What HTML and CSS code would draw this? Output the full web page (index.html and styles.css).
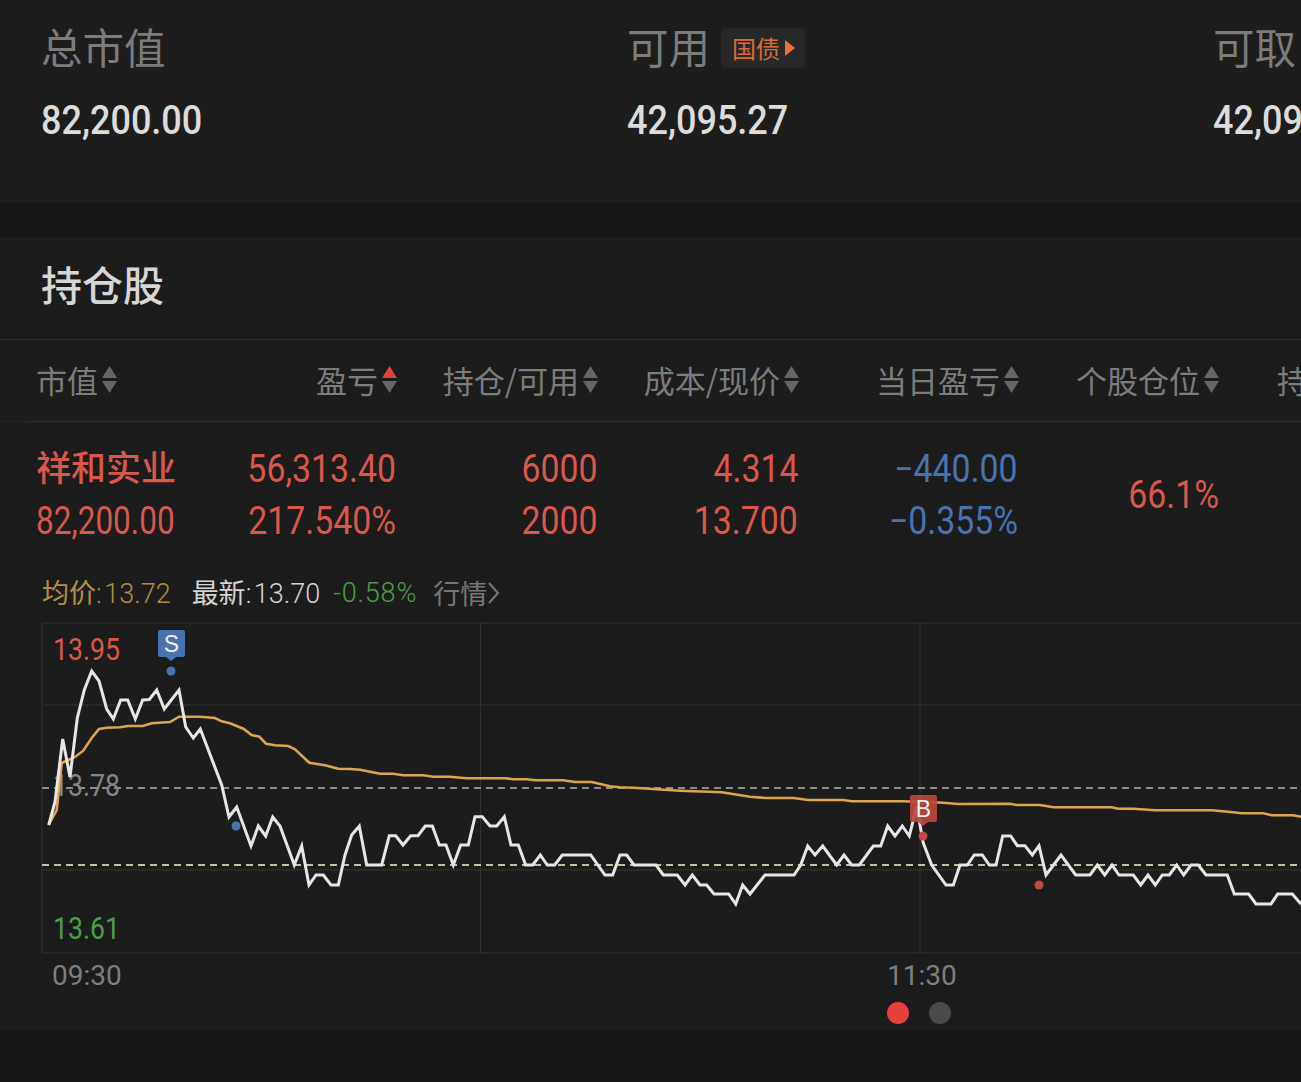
FILE: index.html
```html
<!DOCTYPE html>
<html lang="zh-CN">
<head>
  <meta charset="UTF-8">
  <title>持仓股</title>
  <link rel="stylesheet" href="styles.css">
</head>
<body>

  <svg class="defs" width="0" height="0">
    <symbol id="sort" viewBox="0 0 15 28">
      <polygon points="7.5,0 15,12 0,12" fill="#666"/>
      <polygon points="0,15 15,15 7.5,27" fill="#666"/>
    </symbol>
    <symbol id="sort-up" viewBox="0 0 15 28">
      <polygon points="7.5,0 15,12 0,12" fill="#e2403f"/>
      <polygon points="0,15 15,15 7.5,27" fill="#666"/>
    </symbol>
  </svg>

  <section class="stats">
    <div class="stat">
      <div class="stat-label">总市值</div>
      <div class="stat-value">82,200.00</div>
    </div>
    <div class="stat">
      <div class="stat-label">可用
        <span class="badge">国债<svg class="badge-arrow" width="10" height="16" viewBox="0 0 10 16"><polygon points="0,0 10,8 0,16" fill="#e8713a"/></svg></span>
      </div>
      <div class="stat-value">42,095.27</div>
    </div>
    <div class="stat">
      <div class="stat-label">可取</div>
      <div class="stat-value">42,095.27</div>
    </div>
  </section>

  <div class="band"></div>

  <section class="holdings">
    <h2 class="title">持仓股</h2>

    <div class="table-head">
      <div class="th th-left">市值<svg class="sort"><use href="#sort"/></svg></div>
      <div class="th">盈亏<svg class="sort"><use href="#sort-up"/></svg></div>
      <div class="th">持仓/可用<svg class="sort"><use href="#sort"/></svg></div>
      <div class="th">成本/现价<svg class="sort"><use href="#sort"/></svg></div>
      <div class="th">当日盈亏<svg class="sort"><use href="#sort"/></svg></div>
      <div class="th">个股仓位<svg class="sort"><use href="#sort"/></svg></div>
      <div class="th th-left th-last">持仓天数</div>
    </div>

    <div class="table-row">
      <div class="td td-left red"><span class="name">祥和实业</span><span>82,200.00</span></div>
      <div class="td red"><span>56,313.40</span><span>217.540%</span></div>
      <div class="td red"><span>6000</span><span>2000</span></div>
      <div class="td red"><span>4.314</span><span>13.700</span></div>
      <div class="td blue"><span>−440.00</span><span>−0.355%</span></div>
      <div class="td td-mid red"><span>66.1%</span></div>
    </div>

    <div class="quote">
      <span class="gold"><i>均价</i>: 13.72</span>
      <span class="latest"><i>最新</i>: 13.70</span>
      <span class="green">-0.58%</span>
      <span class="more"><i>行情</i><svg width="13" height="24" viewBox="0 0 13 24"><polyline points="2,2 11,12 2,22" fill="none" stroke="#777" stroke-width="2"/></svg></span>
    </div>

    <svg class="chart" width="1301" height="340" viewBox="0 620 1301 340">
      <g class="grid">
        <line x1="42" y1="623" x2="1301" y2="623"/>
        <line x1="42" y1="705" x2="1301" y2="705"/>
        <line x1="42" y1="870" x2="1301" y2="870"/>
        <line x1="42" y1="953" x2="1301" y2="953"/>
        <line x1="42" y1="623" x2="42" y2="953"/>
        <line x1="480.5" y1="623" x2="480.5" y2="953"/>
        <line x1="920" y1="623" x2="920" y2="953"/>
      </g>
      <line class="dash-prev" x1="42" y1="788" x2="1301" y2="788"/>
      <line class="dash-cost" x1="42" y1="865" x2="1301" y2="865"/>

      <text class="axis-red" x="53" y="660" textLength="67" lengthAdjust="spacingAndGlyphs">13.95</text>
      <text class="axis-gray" x="53" y="796" textLength="67" lengthAdjust="spacingAndGlyphs">13.78</text>
      <text class="axis-green" x="53" y="939" textLength="67" lengthAdjust="spacingAndGlyphs">13.61</text>

      <polyline class="line-avg" points="48.7,825 56.7,810 61.7,763 75,757 83.3,750.7 91.7,738 99,729 106.7,727.7 120,727.3 128.3,726 142.7,726 151.7,723.3 170,722 179,716.7 200,716.7 215,718 221.7,721.3 230,723.3 243.3,728.7 251.7,735 259.3,736.7 266,743.7 275,745.3 288.3,746 295,749.3 309.3,762.7 325,765.3 338.3,768.7 350,769 360,769.7 380,773.7 393.3,773.7 403.3,775.3 423.3,775.3 433.3,776.7 450,776.7 466.7,778.3 505,778.3 513,779.3 526.7,779.3 535,780.3 563.3,780.3 575,782 591.7,782 610,786.3 620,787.3 633.3,787.7 656.7,789.3 680,790.7 721.7,792.3 750,796.7 765,798 793.3,798 808.3,800 843.3,800 851.7,801.3 903.3,801.3 943,802.7 958,804 1010,803.7 1016.7,805 1040,805 1053.3,807.3 1111.7,807.3 1118.3,808.7 1133.3,808.7 1155,810.3 1211.7,810.3 1228.3,811.7 1241.7,813.3 1263.3,813.3 1271.7,815.3 1293.3,815.3 1301,816.7"/>

      <polyline class="line-price" points="48.7,825 55,802 62.7,739 70,777 77.3,718 84.3,690 91.7,671 99,681 106.7,709 113.3,719 120.7,700 127.7,700 135.3,719 142.7,700 149.3,699.5 156.7,690 164.3,709 179,690 185.7,727 193.3,738 200.3,729 221.7,785 229,817 236.7,807 251,846 258.3,826 265.7,836 272.7,817 280,826 294.3,865 301.7,846 309,885 316,875 323.3,875 331,885 338.3,885 345,855 351.7,835 359.3,826 366.7,865 381.7,865 389.3,835.7 395.7,835.7 403,845 410.7,835.7 418,835.7 425.3,826 432.3,826 439.3,845 446,845 453.3,865 460.7,845 468.3,845 475,816.7 482.3,816.7 490,826 496.7,826 504.3,816.7 511,845 518.3,845 525.7,865 532.7,865 540.3,855 547.3,865 554.7,865 562.3,855 590.7,855 605,875 612.7,875 620,855 626.7,855 634,865 656,865 663.3,875 677.3,875 685,885 692.3,875 700,885 706.7,885 714,894 728.7,894 735.7,904 742.7,885 750,894 765,875 794,875 800.7,865 807.7,846 815,855 822.7,846 836.7,865 844,855 851.7,865 859.3,865 873.3,846 880.7,846 887.7,826 895,836 902.3,826 909.3,836 916.7,806.7 923.3,843 931.7,865 946,885 953.3,885 960,865 967.3,865 974.3,855 982.3,855 989.3,865 996,865 1002.7,836 1010.7,836 1017.3,845.7 1025,845.7 1032.3,855 1039,845.7 1046,875 1061,855 1075.7,875 1090,875 1097.3,865 1104.7,875 1112,865 1119,875 1133.3,875 1140.7,885 1148,875 1155.3,885 1162.3,875 1169.3,875 1176.7,865 1183.7,875 1191,865 1198.3,865 1206,875 1227.3,875 1234.3,894 1248.7,894 1256,904 1271,904 1277.7,894 1292.3,894 1301,904"/>

      <path class="flag-sell" d="M160 630h23a2 2 0 0 1 2 2v23a2 2 0 0 1 -2 2h-7l-5 4 -5 -4h-6a2 2 0 0 1 -2 -2v-23a2 2 0 0 1 2 -2z"/>
      <text class="flag-text" x="171.5" y="652">S</text>
      <circle class="dot-sell" cx="171" cy="671" r="4.5"/>
      <circle class="dot-sell" cx="236" cy="826" r="4.5"/>

      <path class="flag-buy" d="M912 795h23a2 2 0 0 1 2 2v23a2 2 0 0 1 -2 2h-7l-5 4 -5 -4h-6a2 2 0 0 1 -2 -2v-23a2 2 0 0 1 2 -2z"/>
      <text class="flag-text" x="923.5" y="817">B</text>
      <circle class="dot-buy" cx="923" cy="836" r="4.5"/>
      <circle class="dot-buy" cx="1039" cy="885" r="4.5"/>
    </svg>

    <div class="times">
      <span class="time-open">09:30</span>
      <span class="time-mid">11:30</span>
    </div>

    <div class="pager">
      <span class="pager-dot active"></span>
      <span class="pager-dot"></span>
    </div>
  </section>

  <div class="band-end"></div>

</body>
</html>
```

FILE: styles.css
```css
:root {
  --bg: #1c1c1c;
  --band: #151515;
  --red: #d9574b;
  --blue: #4a72b0;
  --green: #4e9c48;
  --gold: #b48c48;
  --cjk: "Noto Sans CJK SC", sans-serif;
  --num: "Roboto", "Noto Sans CJK SC", sans-serif;
}

html, body {
  margin: 0;
  height: 1082px;
  overflow: hidden;
}

body {
  width: 1301px;
  background-color: var(--bg);
  font-family: var(--cjk);
}

.defs {
  position: absolute;
}

.stats {
  display: grid;
  grid-template-columns: 586px 586px 586px;
  height: 203px;
  box-sizing: border-box;
  padding: 16px 0 0 41px;
  overflow: hidden;
  background-color: #1d1d1d;
}

.stat-label {
  display: flex;
  align-items: center;
  gap: 11px;
  height: 60px;
  font-size: 41.5px;
  font-weight: 400;
  line-height: 60px;
  color: #7c7c7c;
}

.stat-value {
  margin-top: 15px;
  font-family: var(--num);
  font-size: 40px;
  font-weight: 500;
  line-height: 60px;
  color: #dcdcdc;
  white-space: nowrap;
  transform: scaleX(0.9);
  transform-origin: left;
}

.badge {
  display: flex;
  align-items: center;
  gap: 5px;
  box-sizing: border-box;
  width: 84px;
  height: 40px;
  margin-top: 4px;
  padding-left: 11px;
  border-radius: 5px;
  background-color: #282828;
  font-size: 24px;
  font-weight: 400;
  line-height: 40px;
  color: #de6a38;
}

.band {
  height: 34px;
  background-color: var(--band);
}

.band-end {
  height: 52px;
  background-color: var(--band);
}

.holdings {
  height: 793px;
  overflow: hidden;
  background-color: var(--bg);
}

.title {
  height: 103px;
  margin: 0;
  box-sizing: border-box;
  padding-left: 41px;
  border-bottom: 1px solid #2e2e2e;
  font-size: 41px;
  font-weight: 500;
  line-height: 92px;
  color: #d6d6d6;
}

.table-head,
.table-row {
  display: grid;
  grid-template-columns: 140px 221px 201px 201px 220px 200px 200px;
  padding-left: 36px;
}

.table-head {
  height: 82px;
  box-sizing: border-box;
  padding-bottom: 2px;
  border-bottom: 1px solid;
  border-image: linear-gradient(to right, #232323 29px, #2e2e2e 29px) 1;
  width: 1301px;
  overflow: hidden;
}

.th {
  display: flex;
  justify-content: flex-end;
  align-items: center;
  gap: 4px;
  font-size: 31px;
  font-weight: 400;
  line-height: 78px;
  color: #7c7c7c;
  white-space: nowrap;
}

.th-left {
  justify-content: flex-start;
}

.th-last {
  padding-left: 58px;
}

.sort {
  flex: none;
  width: 15px;
  height: 28px;
}

.table-row {
  height: 104px;
  padding-top: 21px;
}

.td {
  display: flex;
  flex-direction: column;
  align-items: flex-end;
  padding-right: 1px;
  font-family: var(--num);
  font-size: 38px;
  line-height: 52px;
  white-space: nowrap;
}

.td span {
  transform: scaleX(0.89);
  transform-origin: right;
}

.td-left {
  align-items: flex-start;
}

.td-left span {
  transform: scaleX(0.83);
  transform-origin: left;
}

.td-mid {
  justify-content: center;
  padding-right: 0;
}

.td .name {
  height: 46px;
  margin-bottom: 6px;
  font-family: var(--cjk);
  font-size: 35px;
  font-weight: 500;
  line-height: 46px;
  transform: none;
}

.red {
  color: var(--red);
}

.blue {
  color: var(--blue);
}

.quote {
  display: flex;
  align-items: center;
  height: 54px;
  margin-top: 19px;
  padding-left: 42px;
  gap: 11px;
  font-family: "Roboto", var(--cjk);
  font-size: 27px;
  font-weight: 300;
  line-height: 54px;
  word-spacing: -4px;
  white-space: nowrap;
}

.quote i {
  font-family: var(--cjk);
  font-style: normal;
  font-weight: 400;
}

.gold {
  color: var(--gold);
  margin-right: 10px;
}

.latest {
  color: #d4d4d4;
}

.green {
  color: var(--green);
  letter-spacing: 0.8px;
  margin-left: 2px;
  margin-right: 5px;
}

.more {
  display: flex;
  align-items: center;
  color: #777;
}

.chart {
  display: block;
}

.grid line {
  stroke: #282828;
  stroke-width: 2;
}

.grid line:nth-child(n+6) {
  stroke-width: 1;
  stroke: #323232;
}

.dash-prev,
.dash-cost {
  stroke-width: 2;
  stroke-dasharray: 7 5;
}

.dash-prev {
  stroke: #8c8c8c;
}

.dash-cost {
  stroke: #c9bda3;
}

.line-avg {
  fill: none;
  stroke: #dca54e;
  stroke-width: 2.6;
}

.line-price {
  fill: none;
  stroke: #e6e6e6;
  stroke-width: 3;
  stroke-linejoin: miter;
}

.chart text {
  font-family: var(--num);
  font-size: 31px;
}

.axis-red {
  fill: var(--red);
}

.axis-gray {
  fill: #858585;
}

.axis-green {
  fill: var(--green);
}

.chart .flag-text {
  font-family: "Liberation Sans", sans-serif;
  font-size: 23px;
  text-anchor: middle;
  fill: #f0f0f0;
}

.flag-sell,
.dot-sell {
  fill: var(--blue);
}

.flag-buy {
  fill: #bb4639;
  opacity: 0.92;
}

.dot-buy {
  fill: #c04a42;
}

.times {
  position: relative;
  height: 40px;
  margin-top: -4px;
  font-family: "Roboto", sans-serif;
  font-size: 28px;
  font-weight: 400;
  line-height: 40px;
  color: #7e7e7e;
}

.time-open {
  position: absolute;
  left: 52px;
}

.time-mid {
  position: absolute;
  left: 887px;
}

.pager {
  display: flex;
  gap: 20px;
  margin-top: 6px;
  padding-left: 887px;
}

.pager-dot {
  width: 22px;
  height: 22px;
  border-radius: 50%;
  background-color: #4a4a4c;
}

.pager-dot.active {
  background-color: #e8403f;
}
```
